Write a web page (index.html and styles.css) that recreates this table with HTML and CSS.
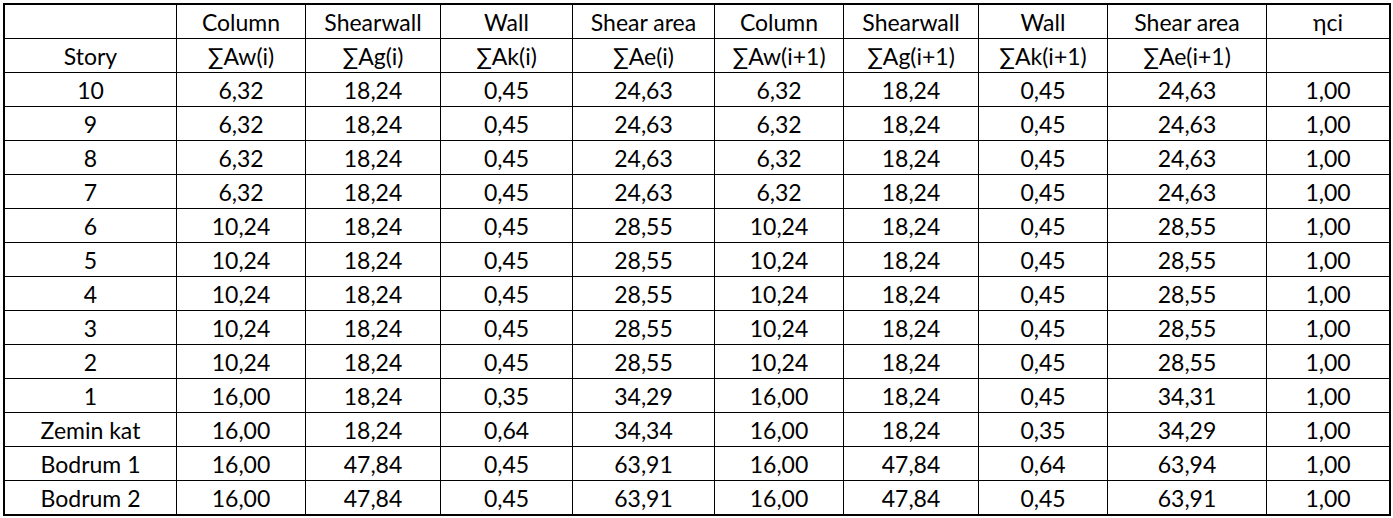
FILE: index.html
```html
<!DOCTYPE html>
<html>
<head>
<meta charset="utf-8">
<link rel="stylesheet" href="styles.css">
</head>
<body>
<div class="sheet">
<table class="grid">
<colgroup>
<col class="c1"><col class="c2"><col class="c3"><col class="c4"><col class="c5"><col class="c6"><col class="c7"><col class="c8"><col class="c9"><col class="c10">
</colgroup>
<thead>
<tr><td></td><td>Column</td><td>Shearwall</td><td>Wall</td><td>Shear area</td><td>Column</td><td>Shearwall</td><td>Wall</td><td>Shear area</td><td>ηci</td></tr>
<tr><td>Story</td><td>∑Aw(i)</td><td>∑Ag(i)</td><td>∑Ak(i)</td><td>∑Ae(i)</td><td>∑Aw(i+1)</td><td>∑Ag(i+1)</td><td>∑Ak(i+1)</td><td>∑Ae(i+1)</td><td></td></tr>
</thead>
<tbody>
<tr><td>10</td><td>6,32</td><td>18,24</td><td>0,45</td><td>24,63</td><td>6,32</td><td>18,24</td><td>0,45</td><td>24,63</td><td>1,00</td></tr>
<tr><td>9</td><td>6,32</td><td>18,24</td><td>0,45</td><td>24,63</td><td>6,32</td><td>18,24</td><td>0,45</td><td>24,63</td><td>1,00</td></tr>
<tr><td>8</td><td>6,32</td><td>18,24</td><td>0,45</td><td>24,63</td><td>6,32</td><td>18,24</td><td>0,45</td><td>24,63</td><td>1,00</td></tr>
<tr><td>7</td><td>6,32</td><td>18,24</td><td>0,45</td><td>24,63</td><td>6,32</td><td>18,24</td><td>0,45</td><td>24,63</td><td>1,00</td></tr>
<tr><td>6</td><td>10,24</td><td>18,24</td><td>0,45</td><td>28,55</td><td>10,24</td><td>18,24</td><td>0,45</td><td>28,55</td><td>1,00</td></tr>
<tr><td>5</td><td>10,24</td><td>18,24</td><td>0,45</td><td>28,55</td><td>10,24</td><td>18,24</td><td>0,45</td><td>28,55</td><td>1,00</td></tr>
<tr><td>4</td><td>10,24</td><td>18,24</td><td>0,45</td><td>28,55</td><td>10,24</td><td>18,24</td><td>0,45</td><td>28,55</td><td>1,00</td></tr>
<tr><td>3</td><td>10,24</td><td>18,24</td><td>0,45</td><td>28,55</td><td>10,24</td><td>18,24</td><td>0,45</td><td>28,55</td><td>1,00</td></tr>
<tr><td>2</td><td>10,24</td><td>18,24</td><td>0,45</td><td>28,55</td><td>10,24</td><td>18,24</td><td>0,45</td><td>28,55</td><td>1,00</td></tr>
<tr><td>1</td><td>16,00</td><td>18,24</td><td>0,35</td><td>34,29</td><td>16,00</td><td>18,24</td><td>0,45</td><td>34,31</td><td>1,00</td></tr>
<tr><td>Zemin kat</td><td>16,00</td><td>18,24</td><td>0,64</td><td>34,34</td><td>16,00</td><td>18,24</td><td>0,35</td><td>34,29</td><td>1,00</td></tr>
<tr><td>Bodrum 1</td><td>16,00</td><td>47,84</td><td>0,45</td><td>63,91</td><td>16,00</td><td>47,84</td><td>0,64</td><td>63,94</td><td>1,00</td></tr>
<tr><td>Bodrum 2</td><td>16,00</td><td>47,84</td><td>0,45</td><td>63,91</td><td>16,00</td><td>47,84</td><td>0,45</td><td>63,91</td><td>1,00</td></tr>
</tbody>
</table>
</div>
</body>
</html>
```

FILE: styles.css
```css
html, body {
  margin: 0;
  padding: 0;
  background: #ffffff;
}
body {
  font-family: "Lato", "Liberation Sans", sans-serif;
  color: #000;
}
.sheet {
  padding: 3px 0 0 3px;
}
.grid {
  border: 2px solid #000;
  border-collapse: separate;
  border-spacing: 0;
  table-layout: fixed;
  width: 1388px;
}
.grid td {
  box-sizing: border-box;
  height: 34px;
  padding: 2px 0 0 0;
  border-right: 1px solid #000;
  border-bottom: 1px solid #000;
  text-align: center;
  vertical-align: middle;
  font-size: 23px;
  line-height: 31px;
  white-space: nowrap;
  overflow: hidden;
}
.grid td:last-child { border-right: none; }
.grid tbody tr:last-child td { border-bottom: none; }
.grid tbody tr:last-child td { height: 33px; }
.c1 { width: 172px; }
.c2 { width: 129px; }
.c3 { width: 135px; }
.c4 { width: 132px; }
.c5 { width: 142px; }
.c6 { width: 129px; }
.c7 { width: 135px; }
.c8 { width: 129px; }
.c9 { width: 159px; }
.c10 { width: 122px; }
```
